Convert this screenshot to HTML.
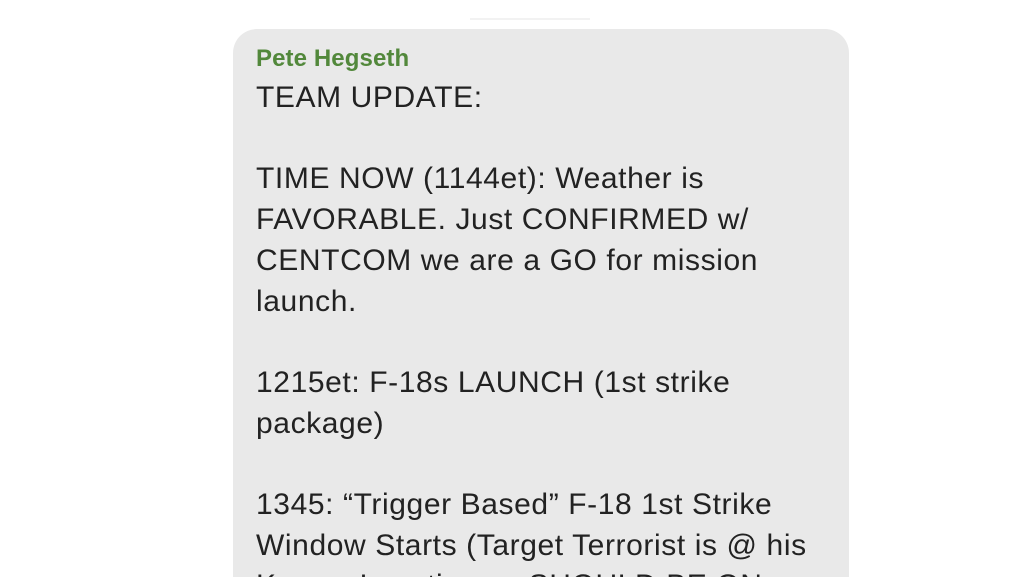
<!DOCTYPE html>
<html><head><meta charset="utf-8"><style>
html,body{margin:0;padding:0;background:#fff;width:1024px;height:577px;overflow:hidden;position:relative}
.b{position:absolute;left:233px;top:29px;width:616px;height:548px;background:#e9e9e9;border-radius:24px 24px 0 0}
.n{position:absolute;left:256px;top:45px;font:600 24px "Liberation Sans",sans-serif;color:#52883b;letter-spacing:0.1px}
.t{position:absolute;left:256px;top:78px;height:499px;overflow:hidden;font:30px/40.7px "Liberation Sans",sans-serif;letter-spacing:0.6px;color:#222;white-space:pre}
.bar{position:absolute;left:470px;top:18px;width:120px;height:2px;background:#f2f2f2}
</style></head><body>
<div class="bar"></div>
<div class="b"></div>
<div class="n">Pete Hegseth</div>
<div class="t">TEAM UPDATE:

TIME NOW (1144et): Weather is
FAVORABLE. Just CONFIRMED w/
CENTCOM we are a GO for mission
launch.

1215et: F-18s LAUNCH (1st strike
package)

1345: “Trigger Based” F-18 1st Strike
Window Starts (Target Terrorist is @ his
Known Location so SHOULD BE ON</div>
</body></html>
